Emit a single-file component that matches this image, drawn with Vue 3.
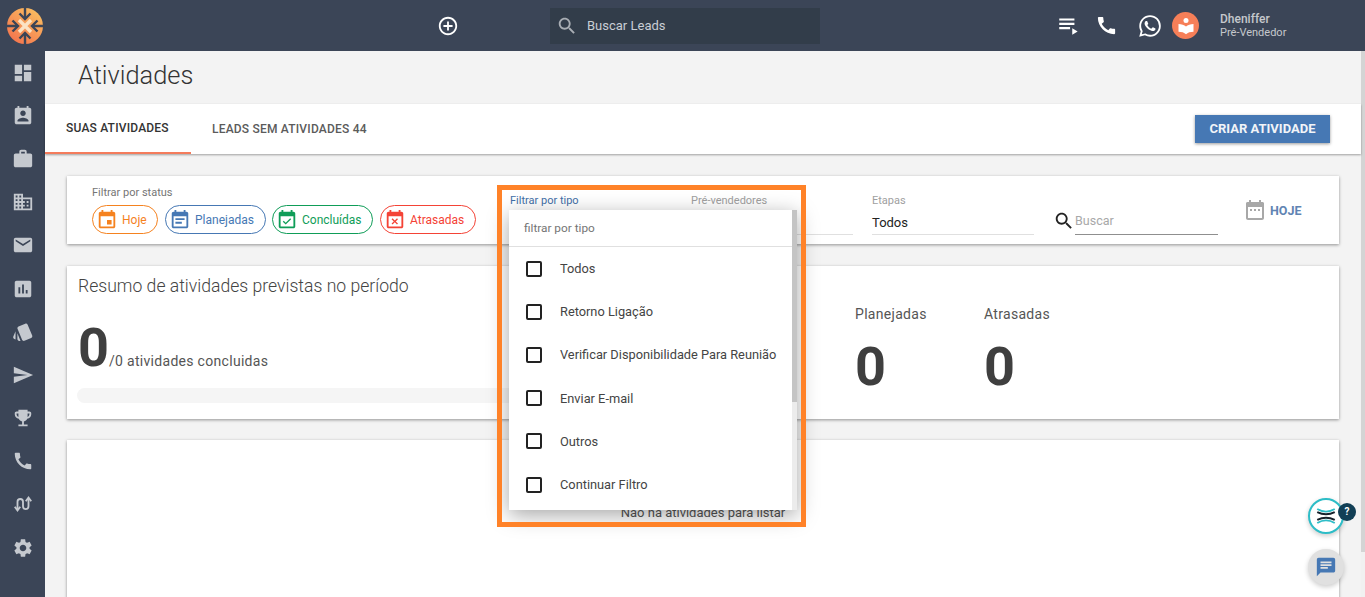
<script setup>
const p = {
  dashboard: 'M3 13h8V3H3v10zm0 8h8v-6H3v6zm10 0h8V11h-8v10zm0-18v6h8V3h-8z',
  contact: 'M19 3h-1V1h-2v2H8V1H6v2H5c-1.11 0-2 .9-2 2v14c0 1.1.89 2 2 2h14c1.1 0 2-.9 2-2V5c0-1.1-.9-2-2-2zm-7 3c1.66 0 3 1.34 3 3s-1.34 3-3 3-3-1.34-3-3 1.34-3 3-3zm6 12H6v-1c0-2 4-3.1 6-3.1s6 1.1 6 3.1v1z',
  work: 'M20 6h-4V4c0-1.11-.89-2-2-2h-4c-1.11 0-2 .89-2 2v2H4c-1.11 0-1.99.89-1.99 2L2 19c0 1.11.89 2 2 2h16c1.11 0 2-.89 2-2V8c0-1.11-.89-2-2-2zm-6 0h-4V4h4v2z',
  domain: 'M12 7V3H2v18h20V7H12zM6 19H4v-2h2v2zm0-4H4v-2h2v2zm0-4H4V9h2v2zm0-4H4V5h2v2zm4 12H8v-2h2v2zm0-4H8v-2h2v2zm0-4H8V9h2v2zm0-4H8V5h2v2zm10 12h-8v-2h2v-2h-2v-2h2v-2h-2V9h8v10zm-2-8h-2v2h2v-2zm0 4h-2v2h2v-2z',
  email: 'M20 4H4c-1.1 0-1.99.9-1.99 2L2 18c0 1.1.9 2 2 2h16c1.1 0 2-.9 2-2V6c0-1.1-.9-2-2-2zm0 4l-8 5-8-5V6l8 5 8-5v2z',
  chart: 'M19 3H5c-1.1 0-2 .9-2 2v14c0 1.1.9 2 2 2h14c1.1 0 2-.9 2-2V5c0-1.1-.9-2-2-2zM9 17H7v-7h2v7zm4 0h-2V7h2v10zm4 0h-2v-4h2v4z',
  style: 'M2.530 19.650l1.340.560v-9.030l-2.430 5.860c-.410 1.020.080 2.190 1.090 2.610zm19.500-3.700L17.070 3.980c-.310-.750-1.040-1.210-1.810-1.230-.260 0-.530.040-.790.150L7.100 5.950c-.750.310-1.210 1.030-1.230 1.800-.010.270.040.540.150.800l4.960 11.970c.310.760 1.050 1.220 1.830 1.230.260 0 .520-.050.770-.150l7.360-3.050c1.020-.420 1.510-1.590 1.090-2.600zM5.880 19.750c0 1.100.900 2 2 2h1.450l-3.450-8.340v6.340z',
  send: 'M2.01 21L23 12 2.01 3 2 10l15 2-15 2z',
  trophy: 'M19 5h-2V3H7v2H5c-1.1 0-2 .9-2 2v1c0 2.55 1.92 4.63 4.39 4.94.63 1.5 1.98 2.63 3.61 2.96V19H7v2h10v-2h-4v-3.1c1.63-.33 2.98-1.46 3.61-2.96C19.08 12.63 21 10.55 21 8V7c0-1.1-.9-2-2-2zM5 8V7h2v3.82C5.84 10.4 5 9.3 5 8zm14 0c0 1.3-.84 2.4-2 2.82V7h2v1z',
  phone: 'M20.01 15.38c-1.23 0-2.42-.2-3.53-.56-.35-.12-.74-.03-1.01.24l-1.57 1.97c-2.83-1.35-5.48-3.9-6.89-6.83l1.95-1.66c.27-.28.35-.67.24-1.02-.37-1.11-.56-2.3-.56-3.53 0-.54-.45-.99-.99-.99H4.19C3.65 3 3 3.24 3 3.99 3 13.28 10.73 21 20.01 21c.71 0 .99-.63.99-1.18v-3.45c0-.54-.45-.99-.99-.99z',
  settings: 'M19.14 12.94c.04-.3.06-.61.06-.94 0-.32-.02-.64-.07-.94l2.03-1.58c.18-.14.23-.41.12-.61l-1.92-3.32c-.12-.22-.37-.29-.59-.22l-2.39.96c-.5-.38-1.03-.7-1.62-.94l-.36-2.54c-.04-.24-.24-.41-.48-.41h-3.84c-.24 0-.43.17-.47.41l-.36 2.54c-.59.24-1.13.57-1.62.94l-2.39-.96c-.22-.08-.47 0-.59.22L2.74 8.87c-.12.21-.08.47.12.61l2.03 1.58c-.05.3-.09.63-.09.94s.02.64.07.94l-2.03 1.58c-.18.14-.23.41-.12.61l1.92 3.32c.12.22.37.29.59.22l2.39-.96c.5.38 1.03.7 1.62.94l.36 2.54c.05.24.24.41.48.41h3.84c.24 0 .44-.17.47-.41l.36-2.54c.59-.24 1.13-.56 1.62-.94l2.39.96c.22.08.47 0 .59-.22l1.92-3.32c.12-.22.07-.47-.12-.61l-2.01-1.58zM12 15.6c-1.98 0-3.6-1.62-3.6-3.6s1.62-3.6 3.6-3.6 3.6 1.62 3.6 3.6-1.62 3.6-3.6 3.6z',
  add: 'M13 7h-2v4H7v2h4v4h2v-4h4v-2h-4V7zm-1-5C6.48 2 2 6.48 2 12s4.48 10 10 10 10-4.48 10-10S17.52 2 12 2zm0 18c-4.41 0-8-3.59-8-8s3.59-8 8-8 8 3.59 8 8-3.59 8-8 8z',
  search: 'M15.5 14h-.79l-.28-.27C15.41 12.59 16 11.11 16 9.5 16 5.91 13.09 3 9.5 3S3 5.91 3 9.5 5.91 16 9.5 16c1.61 0 3.09-.59 4.23-1.57l.27.28v.79l5 4.99L20.49 19l-4.99-5zm-6 0C7.01 14 5 11.99 5 9.5S7.01 5 9.5 5 14 7.01 14 9.5 11.99 14 9.5 14z',
  playlist: 'M3 5h14v2H3zm0 4h14v2H3zm0 4h10v2H3zm12 1v6l5-3z',
  whatsapp: 'M12.04 2c-5.46 0-9.91 4.45-9.91 9.91 0 1.75.46 3.45 1.32 4.95L2.05 22l5.25-1.38c1.45.79 3.08 1.21 4.74 1.21 5.46 0 9.91-4.45 9.91-9.91 0-2.65-1.03-5.14-2.9-7.01C17.18 3.03 14.69 2 12.04 2zm.01 1.67c2.2 0 4.26.86 5.82 2.42a8.225 8.225 0 0 1 2.41 5.83c0 4.54-3.7 8.23-8.24 8.23-1.48 0-2.93-.39-4.19-1.15l-.3-.17-3.12.82.83-3.04-.2-.32a8.188 8.188 0 0 1-1.26-4.38c.01-4.54 3.7-8.24 8.25-8.24zM8.53 7.33c-.16 0-.43.06-.66.31-.22.25-.87.86-.87 2.07 0 1.22.89 2.39 1 2.56.14.17 1.76 2.67 4.25 3.73.59.27 1.05.42 1.41.53.59.19 1.13.16 1.56.1.48-.07 1.46-.6 1.67-1.18.21-.58.21-1.07.15-1.18-.07-.1-.23-.16-.48-.27-.25-.14-1.47-.74-1.69-.82-.23-.08-.37-.12-.56.12-.16.25-.64.81-.78.97-.15.17-.29.19-.53.07-.26-.13-1.06-.39-2-1.23-.74-.66-1.23-1.47-1.38-1.72-.12-.24-.01-.39.11-.5.11-.11.27-.29.37-.44.13-.14.17-.25.25-.41.08-.17.04-.31-.02-.43-.06-.11-.56-1.35-.77-1.84-.2-.48-.4-.42-.56-.43-.14 0-.3-.01-.47-.01z',
  event: 'M17 12h-5v5h5v-5zM16 1v2H8V1H6v2H5c-1.11 0-1.99.9-1.99 2L3 19c0 1.1.89 2 2 2h14c1.1 0 2-.9 2-2V5c0-1.1-.9-2-2-2h-1V1h-2zm3 18H5V8h14v11z',
  note: 'M17 10H7v2h10v-2zm2-7h-1V1h-2v2H8V1H6v2H5c-1.11 0-1.99.9-1.99 2L3 19c0 1.1.89 2 2 2h14c1.1 0 2-.9 2-2V5c0-1.1-.9-2-2-2zm0 16H5V8h14v11zm-5-5H7v2h7v-2z',
  available: 'M16.53 11.06L15.47 10l-4.88 4.88-2.12-2.12-1.06 1.06L10.59 17l5.94-5.94zM19 3h-1V1h-2v2H8V1H6v2H5c-1.11 0-1.99.9-1.99 2L3 19c0 1.1.89 2 2 2h14c1.1 0 2-.9 2-2V5c0-1.1-.9-2-2-2zm0 16H5V8h14v11z',
  busy: 'M9.31 17l2.44-2.44L14.19 17l1.06-1.06-2.44-2.44 2.44-2.44L14.19 10l-2.44 2.44L9.31 10l-1.06 1.06 2.44 2.44-2.44 2.44L9.31 17zM19 3h-1V1h-2v2H8V1H6v2H5c-1.11 0-1.99.9-1.99 2L3 19c0 1.1.89 2 2 2h14c1.1 0 2-.9 2-2V5c0-1.1-.9-2-2-2zm0 16H5V8h14v11z',
  range: 'M9 11H7v2h2v-2zm4 0h-2v2h2v-2zm4 0h-2v2h2v-2zm2-7h-1V2h-2v2H8V2H6v2H5c-1.11 0-1.99.9-1.99 2L3 20c0 1.1.89 2 2 2h14c1.1 0 2-.9 2-2V6c0-1.1-.9-2-2-2zm0 16H5V9h14v11z',
  chat: 'M20 2H4c-1.1 0-1.99.9-1.99 2L2 22l4-4h14c1.1 0 2-.9 2-2V4c0-1.1-.9-2-2-2zM6 9h12v2H6V9zm8 5H6v-2h8v2zm4-6H6V6h12v2z'
}
const side = ['dashboard','contact','work','domain','email','chart','style','send','trophy','phone','swap','settings']
const chips = [
  { label: 'Hoje', icon: 'event', cls: 'c-orange' },
  { label: 'Planejadas', icon: 'note', cls: 'c-blue' },
  { label: 'Concluídas', icon: 'available', cls: 'c-green' },
  { label: 'Atrasadas', icon: 'busy', cls: 'c-red' }
]
const options = ['Todos','Retorno Ligação','Verificar Disponibilidade Para Reunião','Enviar E-mail','Outros','Continuar Filtro']
</script>

<template>
  <div class="app">
    <header class="top">
      <svg class="logo" viewBox="0 0 36 36">
        <defs>
          <linearGradient id="lg" x1="0.8" y1="0.1" x2="0.2" y2="0.9">
            <stop offset="0" stop-color="#f9b95f" />
            <stop offset="1" stop-color="#f4784f" />
          </linearGradient>
        </defs>
        <circle cx="18" cy="18" r="18" fill="url(#lg)" />
        <g stroke="#3b4557" stroke-width="2.4" fill="none">
          <path d="M18 0v10M18 26v10M0 18h10M26 18h10" />
          <path d="M12.500 5.500L18 11l5.500-5.500M12.500 30.500L18 25l5.500 5.500M5.500 12.500L11 18l-5.500 5.500M30.500 12.500L25 18l5.500 5.500" />
        </g>
        <path d="M12 12L24 24M24 12L12 24" stroke="#fbe3c4" stroke-width="3.400" />
      </svg>
      <svg class="ic-add" viewBox="0 0 24 24"><path :d="p.add" /></svg>
      <div class="lead-search">
        <svg viewBox="0 0 24 24"><path :d="p.search" /></svg>
        <span>Buscar Leads</span>
      </div>
      <svg class="ic-list" viewBox="0 0 24 24"><path :d="p.playlist" /></svg>
      <svg class="ic-phone" viewBox="0 0 24 24"><path :d="p.phone" /></svg>
      <svg class="ic-wa" viewBox="0 0 24 24"><path :d="p.whatsapp" /></svg>
      <div class="avatar">
        <svg viewBox="0 0 24 24">
          <circle cx="12" cy="5.500" r="3" />
          <path d="M3 9.500c3.500 0 7 1 9 3 2-2 5.500-3 9-3V19c-3.500 0-7 1-9 3-2-2-5.500-3-9-3z" />
        </svg>
      </div>
      <div class="user">
        <strong>Dheniffer</strong>
        <span>Pré-Vendedor</span>
      </div>
    </header>

    <div class="body">
      <nav class="side">
        <div v-for="s in side" :key="s" class="side-item">
          <svg v-if="s === 'swap'" viewBox="0 0 24 24" class="swap">
            <path d="M6 18V9.500a3 3 0 0 1 6 0v5a3 3 0 0 0 6 0V6" />
            <path d="M3 15l3 4 3-4M15 9l3-4 3 4" />
          </svg>
          <svg v-else viewBox="0 0 24 24"><path :d="p[s]" /></svg>
        </div>
      </nav>

      <main class="main">
        <h1 class="title">Atividades</h1>
        <div class="tabs">
          <div class="tab active">SUAS ATIVIDADES</div>
          <div class="tab">LEADS SEM ATIVIDADES 44</div>
          <button class="create">CRIAR ATIVIDADE</button>
        </div>

        <section class="card filters">
          <div class="status">
            <div class="f-label">Filtrar por status</div>
            <div class="chips">
              <div v-for="c in chips" :key="c.label" class="chip" :class="c.cls">
                <svg viewBox="0 0 24 24"><path :d="p[c.icon]" /></svg>
                <span>{{ c.label }}</span>
              </div>
            </div>
          </div>
          <div class="field f1"><div class="f-label blue">Filtrar por tipo</div><div class="f-value"></div></div>
          <div class="field f2"><div class="f-label pale">Pré-vendedores</div><div class="f-value"></div></div>
          <div class="field f3"><div class="f-label pale">Etapas</div><div class="f-value">Todos</div></div>
          <svg class="find" viewBox="0 0 24 24"><path :d="p.search" /></svg>
          <div class="find-input">Buscar</div>
          <div class="today">
            <svg viewBox="0 0 24 24"><path d="M5 4h14a2 2 0 0 1 2 2v3H3V6a2 2 0 0 1 2-2zM6 2h2v3H6zM16 2h2v3h-2z" /><path :d="p.range" /></svg>
            <span>HOJE</span>
          </div>
        </section>

        <section class="card summary">
          <h2>Resumo de atividades previstas no período</h2>
          <div class="sum-row">
            <div class="done">
              <div class="done-line"><b>0</b><span>/0 atividades concluidas</span></div>
              <div class="bar"></div>
            </div>
            <div class="stat"><span>Planejadas</span><b>0</b></div>
            <div class="stat"><span>Atrasadas</span><b>0</b></div>
          </div>
        </section>

        <section class="card list">
          <p>Não há atividades para listar</p>
        </section>
      </main>
      <div class="scrollbar"><div class="thumb"></div></div>
    </div>

    <div class="dropdown">
      <div class="dd-head">filtrar por tipo</div>
      <div class="dd-list">
        <label v-for="o in options" :key="o" class="dd-item">
          <i class="box"></i><span>{{ o }}</span>
        </label>
      </div>
      <div class="dd-scroll"><div class="dd-thumb"></div></div>
    </div>
    <div class="annot"></div>

    <div class="fab help">
      <svg viewBox="0 0 32 32">
        <path d="M6 8q10 6 20 0" stroke="#2dbdc7" />
        <path d="M6 11.500q10 5 20 0" stroke="#16202a" />
        <path d="M6 20.500q10-5 20 0" stroke="#16202a" />
        <path d="M6 24q10-6 20 0" stroke="#2dbdc7" />
      </svg>
      <span class="q">?</span>
    </div>
    <div class="fab chat">
      <svg viewBox="0 0 24 24"><path :d="p.chat" /></svg>
    </div>
  </div>
</template>

<style>
html, body { margin: 0; height: 100%; overflow: hidden; }
</style>

<style scoped>
.app { height: 597px; width: 1365px; overflow: hidden; position: relative; display: flex; flex-direction: column; font-family: Roboto, "Liberation Sans", sans-serif; background: #f3f3f3; color: #3f3f3f; }
svg { fill: currentColor; display: block; flex: none; }

.top { height: 51px; flex: none; background: #3b4557; display: flex; align-items: center; color: #fff; }
.logo { width: 36px; height: 36px; margin-left: 7px; }
.ic-add { width: 22px; height: 22px; margin-left: 394px; }
.lead-search { width: 270px; height: 36px; margin-left: 91px; background: #323d4a; display: flex; align-items: center; color: #c9ced5; font-size: 13px; }
.lead-search svg { width: 22px; height: 22px; margin-left: 6px; color: #a9aeb4; }
.lead-search span { margin-left: 9px; }
.ic-list { width: 26px; height: 26px; margin-left: 236px; }
.ic-phone { width: 23px; height: 23px; margin-left: 13px; }
.ic-wa { width: 26px; height: 26px; margin-left: 19px; }
.avatar { width: 27px; height: 27px; border-radius: 50%; background: #f67f58; margin-left: 9px; display: flex; align-items: center; justify-content: center; color: #fff; }
.avatar svg { width: 20px; height: 20px; }
.user { margin-left: 21px; display: flex; flex-direction: column; color: #c5c8cc; line-height: 13px; }
.user strong { font-size: 12px; font-weight: 500; }
.user span { font-size: 11px; }

.body { flex: 1; display: flex; min-height: 0; }
.side { width: 45px; flex: none; background: #3b4557; color: #c5c9cf; }
.side-item { height: 43.200px; display: flex; align-items: center; justify-content: center; }
.side-item svg { width: 22px; height: 22px; }
.side-item .swap { fill: none; stroke: currentColor; stroke-width: 2; }

.main { flex: 1; min-width: 0; }
.scrollbar { width: 4px; flex: none; background: #f1f1f1; }
.thumb { height: 501px; background: #d4d4d4; }
.title { margin: 0; height: 53px; padding-left: 33px; font-size: 25.400px; font-weight: 300; line-height: 48px; color: #333; box-sizing: border-box; }
.tabs { height: 50px; background: #fff; box-shadow: 0 1px 2px rgba(0,0,0,.35); display: flex; align-items: stretch; position: relative; }
.tab { font-size: 12px; font-weight: 500; color: #5b5b5b; letter-spacing: .2px; padding: 0 21px; display: flex; align-items: center; }
.tab.active { color: #333; border-bottom: 2px solid #f47c5c; height: 48px; padding: 0 0 0 21px; width: 125px; }
.create { margin: 11px 31px 11px auto; width: 135px; height: 28px; border: 0; background: #4678b4; color: #f1f4f8; font: 700 13px Roboto, sans-serif; box-shadow: 0 1px 3px rgba(0,0,0,.4); padding: 0 0 2px; }

.card { background: #fff; box-shadow: 0 1px 3px rgba(0,0,0,.4); margin: 0 22px; }
.filters { height: 68px; margin-top: 22px; position: relative; display: flex; }
.status { margin-left: 25px; width: 418px; padding-top: 10px; }
.f-label { font-size: 11px; color: #757575; line-height: 13px; }
.f-label.blue { color: #3f6fa8; }
.f-label.pale { color: #a0a0a0; }
.chips { display: flex; gap: 7px; margin-top: 6px; }
.chip { height: 29px; box-sizing: border-box; border: 1px solid; border-radius: 15px; display: flex; align-items: center; font-size: 12px; padding: 0 11px 0 3px; gap: 4px; }
.chip svg { width: 22px; height: 22px; }
.c-orange { color: #f5821f; width: 66px; }
.c-blue { color: #4678b4; width: 101px; }
.c-green { color: #0f9d58; width: 101px; margin-left: -1px; }
.c-red { color: #f44336; width: 96px; }

.field { width: 162px; height: 58px; box-sizing: border-box; padding-top: 18px; display: flex; flex-direction: column; margin-right: 19px; }
.f-value { border-bottom: 1px solid #e0e0e0; font-size: 13px; height: 24px; line-height: 25px; margin-top: 3px; color: #222; flex: none; }
.find { width: 22px; height: 22px; margin-top: 34px; color: #222; }
.find-input { width: 143px; height: 26px; margin-top: 32px; border-bottom: 1px solid #8f8f8f; font-size: 12.500px; color: #a8a8a8; line-height: 25px; }
.today { display: flex; align-items: center; gap: 3px; margin-left: 25px; margin-top: 22px; height: 24px; color: #5f84b3; font-size: 12.500px; font-weight: 700; }
.today svg { width: 24px; height: 24px; color: #a8a8a8; }

.summary { height: 153px; margin-top: 22px; padding: 9px 11px; box-sizing: border-box; position: relative; }
.summary h2 { margin: 0; font-size: 17.600px; font-weight: 300; line-height: 22px; color: #444; }
.sum-row { display: flex; }
.done { width: 777px; }
.done-line { display: flex; align-items: baseline; margin-top: 20px; height: 62px; }
.done-line b { font-size: 54px; line-height: 62px; color: #3f3f3f; }
.done-line span { font-size: 14px; letter-spacing: .3px; color: #555; }
.bar { width: 640px; height: 15px; border-radius: 8px; background: #f5f5f5; margin: 9px 0 0 -1px; }
.stat { width: 129px; display: flex; flex-direction: column; margin-top: -13px; padding-top: 22px; }
.stat span { font-size: 14px; letter-spacing: .3px; color: #555; line-height: 16px; }
.stat b { font-size: 54px; line-height: 62px; color: #3f3f3f; margin-top: 14px; }

.list { height: 260px; margin-top: 21px; }
.list p { margin: 0; padding-top: 65px; text-align: center; font-size: 13px; line-height: 16px; color: #555; }

.dropdown { position: absolute; left: 509px; top: 210px; width: 288px; height: 300px; background: #fff; box-shadow: 0 5px 20px rgba(0,0,0,.35); overflow: hidden; }
.dd-head { height: 36px; line-height: 36px; padding-left: 15px; border-bottom: 1px solid #e0e0e0; font-size: 11.800px; color: #757575; }
.dd-list { display: flex; flex-direction: column; }
.dd-item { height: 43.200px; display: flex; align-items: center; padding-left: 17px; font-size: 12.800px; color: #444; }
.box { width: 12px; height: 12px; border: 2px solid #222; border-radius: 2px; flex: none; margin-right: 18px; }
.dd-scroll { position: absolute; right: 0; top: 0; bottom: 0; width: 5px; background: #ececec; }
.dd-thumb { height: 192px; background: #c4c4c4; }

.annot { position: absolute; left: 497px; top: 185px; width: 309px; height: 342px; box-sizing: border-box; border: 5px solid #ff8228; }

.fab { position: absolute; width: 36px; height: 36px; border-radius: 50%; box-sizing: border-box; display: flex; align-items: center; justify-content: center; left: 1308px; box-shadow: 0 2px 5px rgba(0,0,0,.2); }
.help { top: 498px; background: #fff; border: 2px solid #2dbdc7; }
.help svg { width: 28px; height: 28px; fill: none; stroke-width: 2.200; }
.q { position: absolute; left: 28px; top: 3px; width: 18px; height: 18px; border-radius: 50%; background: #123f55; color: #fff; font-size: 10px; font-weight: 700; line-height: 18px; text-align: center; }
.chat { top: 549px; background: #e0e0e0; color: #4678b4; }
.chat svg { width: 22px; height: 22px; }
</style>
